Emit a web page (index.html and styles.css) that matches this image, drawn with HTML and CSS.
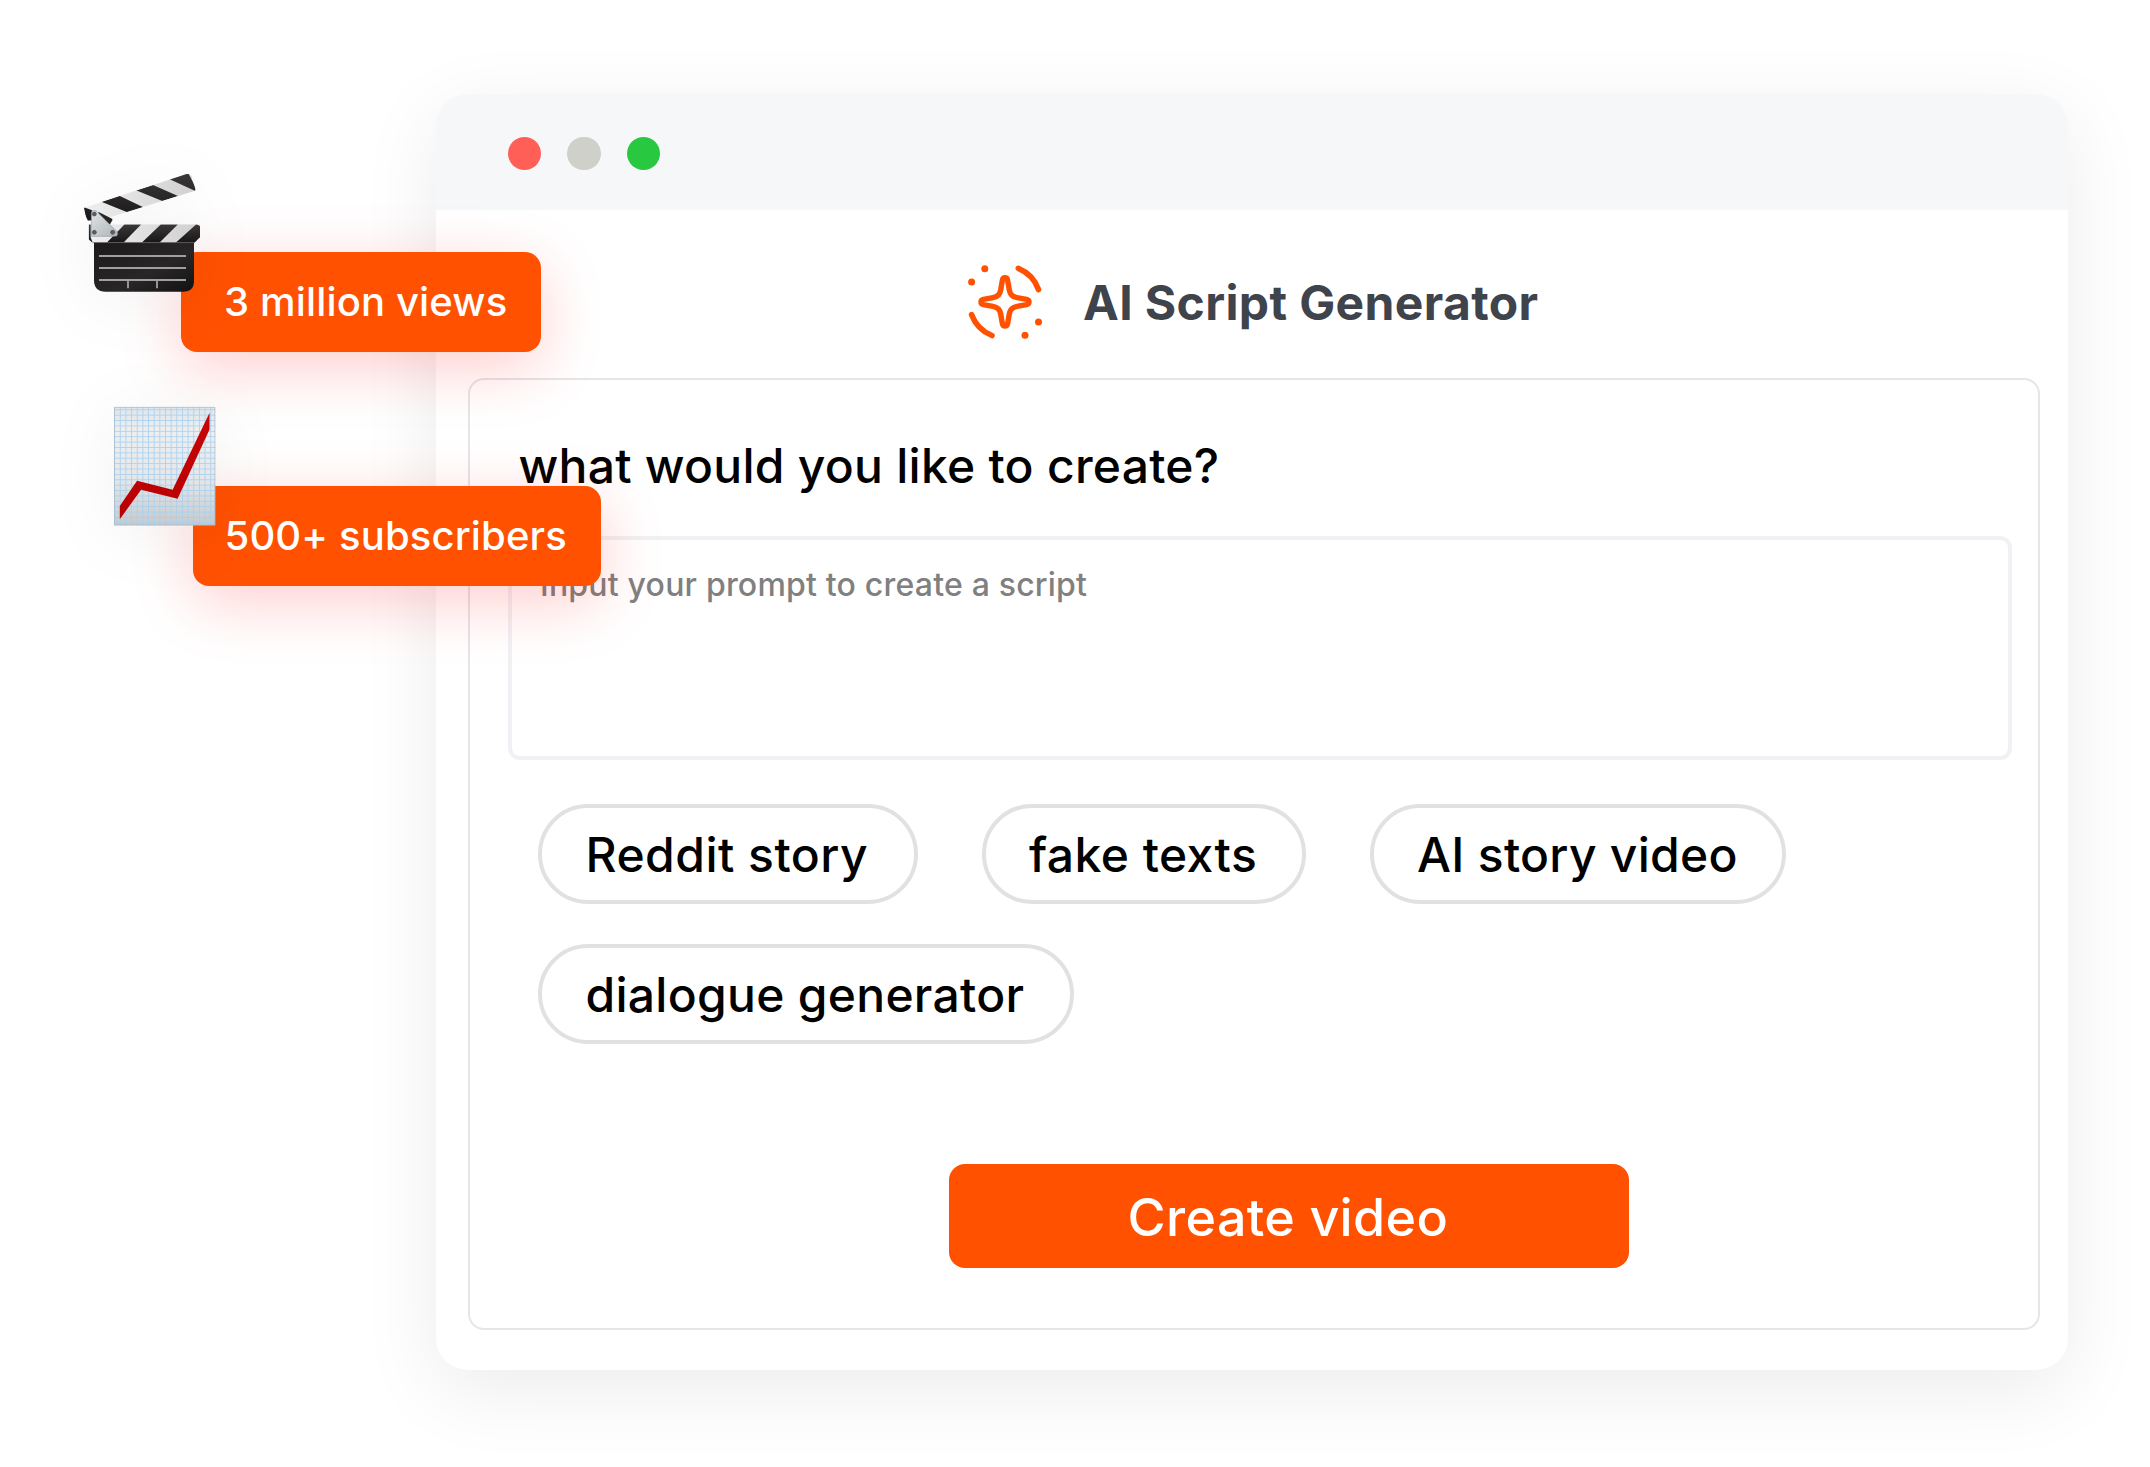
FILE: index.html
```html
<!DOCTYPE html>
<html lang="en">
<head>
<meta charset="utf-8">
<title>AI Script Generator</title>
<link rel="stylesheet" href="styles.css">
</head>
<body>
<main class="stage">
  <section class="window">
    <header class="titlebar">
      <span class="dot dot-red"></span>
      <span class="dot dot-gray"></span>
      <span class="dot dot-green"></span>
    </header>
    <div class="brand">
      <svg class="brand-icon" viewBox="0 0 80 80" fill="none" stroke="#ff5100" stroke-linecap="round" stroke-linejoin="round">
        <path stroke-width="5.4" d="M40 15.8C41.6 15.8 42.3 16.8 42.6 18.1L44.3 28C45 32.3 47.7 35 52 35.7L61.6 37.4C63 37.7 64 38.5 64 40C64 41.5 63 42.3 61.6 42.6L52 44.3C47.7 45 45 47.7 44.3 52L42.6 61.7C42.3 63.1 41.6 64.1 40 64.1C38.4 64.1 37.7 63.1 37.4 61.7L35.7 52C35 47.7 32.3 45 28 44.3L18.4 42.6C17 42.3 16 41.5 16 40C16 38.5 17 37.7 18.4 37.4L28 35.7C32.3 35 35 32.3 35.7 28L37.4 18.1C37.7 16.8 38.4 15.8 40 15.8Z"/>
        <path stroke-width="5.6" d="M53.3 6.3A36 36 0 0 1 73.5 27.5M6.6 52.7A36 36 0 0 0 27 73.5"/>
        <g fill="#ff5100" stroke="none"><circle cx="19.8" cy="6.7" r="3.5"/><circle cx="6.6" cy="20" r="3.5"/><circle cx="73.5" cy="60" r="3.5"/><circle cx="60" cy="73.3" r="3.5"/></g>
      </svg>
      <h1 class="brand-title">AI Script Generator</h1>
    </div>
    <div class="panel">
      <h2 class="question">what would you like to create?</h2>
      <div class="prompt">Input your prompt to create a script</div>
      <div class="chips">
        <span class="chip chip-reddit">Reddit story</span>
        <span class="chip chip-texts">fake texts</span>
        <span class="chip chip-story">AI story video</span>
        <span class="chip chip-dialogue">dialogue generator</span>
      </div>
      <button class="create">Create video</button>
    </div>
  </section>

  <div class="badge badge-views">3 million views</div>
  <div class="badge badge-subs">500+ subscribers</div>

  <svg class="emoji clapper" viewBox="0 0 540 480">
    <defs>
      <linearGradient id="slate" x1="0" y1="0" x2="1" y2="1"><stop offset="0" stop-color="#1b1919"/><stop offset=".6" stop-color="#282626"/><stop offset="1" stop-color="#131212"/></linearGradient>
      <linearGradient id="pale" x1="0" y1="0" x2="1" y2="0"><stop offset="0" stop-color="#f0f0f0"/><stop offset="1" stop-color="#cfcfcf"/></linearGradient>
      <linearGradient id="hinge" x1="0" y1="0" x2="1" y2="1"><stop offset="0" stop-color="#e1e4e6"/><stop offset="1" stop-color="#aeb4b8"/></linearGradient>
      <linearGradient id="ink" x1="0" y1="0" x2="0" y2="1"><stop offset="0" stop-color="#3a3838"/><stop offset="1" stop-color="#181616"/></linearGradient>
      <clipPath id="arm"><path d="M72 173L380 72Q390 69 394 79L406 116Q408 121 403 123L150 202L130 208L84 212Q76 200 72 173Z"/></clipPath>
      <clipPath id="bar"><path d="M86 223H414Q420 223 420 230V262L404 278H97L86 268Z"/></clipPath>
    </defs>
    <g clip-path="url(#arm)">
      <rect x="60" y="60" width="360" height="170" fill="url(#pale)"/>
      <path fill="url(#ink)" d="M70 171L96 181V214H80ZM124 155L178 137L250 172L202 187ZM228 121L279 105L354 138L307 153ZM329 88L384 68L412 122L406 123Z"/>
    </g>
    <path d="M116 186L153 205L158 209L150 223H100Z" fill="#252323"/>
    <path d="M102 270H402V392Q402 425 369 425H137Q102 425 102 390Z" fill="url(#slate)"/>
    <g clip-path="url(#bar)">
      <rect x="80" y="220" width="345" height="60" fill="url(#pale)"/>
      <path fill="url(#ink)" d="M80 223H92V262L98 278H80ZM194 223H244L190 278H140ZM303 223H354L298 278H245ZM409 223L420 228V262L404 278H347Z"/>
    </g>
    <path d="M98 278H404" stroke="#555" stroke-width="2"/>
    <path d="M94 190Q94 180 104 181Q111 182 115 189L172 246Q176 260 163 259H94Z" fill="url(#hinge)" stroke="#7f8589" stroke-width="1.5"/>
    <g fill="#5b5f62" stroke="#44484a" stroke-width="2"><circle cx="103" cy="192" r="6"/><circle cx="103" cy="247" r="6"/><circle cx="158" cy="247" r="6"/></g>
    <path d="M117 318H378M117 354H378M117 390H378M204 391V415M291 391V415" fill="none" stroke="#a0a0a0" stroke-width="5.5"/>
  </svg>

  <svg class="emoji chart" viewBox="0 0 306 358">
    <defs>
      <linearGradient id="paper" x1="0" y1="0" x2="0" y2="1"><stop offset="0" stop-color="#e0e5e8"/><stop offset=".2" stop-color="#efefef"/><stop offset=".6" stop-color="#e6e7e8"/><stop offset="1" stop-color="#c6cacd"/></linearGradient>
      <linearGradient id="line" x1="0" y1="0" x2="0" y2="1"><stop offset="0" stop-color="#c80507"/><stop offset="1" stop-color="#b80002"/></linearGradient>
      <pattern id="grid" x="17" y="7" width="17" height="16.2" patternUnits="userSpaceOnUse"><path d="M1.5 0V16.2M0 1.5H17" stroke="#a3cff2" stroke-width="3" opacity=".85"/></pattern>
    </defs>
    <rect width="304" height="356" fill="url(#paper)"/>
    <rect width="304" height="356" fill="url(#grid)"/>
    <path d="M1 1H303V355H1Z" fill="none" stroke="#9fb2bf" stroke-width="3" opacity=".6"/>
    <path d="M17 298L69 222L176 249L287 17V68L191 276L81 249L17 338Z" fill="url(#line)"/>
  </svg>
</main>
</body>
</html>
```
FILE: styles.css
```css
* { box-sizing: border-box; }

body {
  margin: 0;
  background: #fff;
  font-family: Inter, "Liberation Sans", sans-serif;
  color: #000;
}

.stage {
  position: relative;
  width: 2150px;
  height: 1467px;
  padding: 94px 82px 97px 436px;
  overflow: hidden;
}

.window {
  height: 1276px;
  border-radius: 32px;
  background: #fff;
  box-shadow: 0 20px 80px rgba(0, 0, 0, .08);
}

.titlebar {
  display: flex;
  align-items: center;
  gap: 26.4px;
  height: 116px;
  padding: 3px 0 0 71.8px;
  border-radius: 32px 32px 0 0;
  background: #f5f7f9;
}

.dot { width: 33.2px; height: 33.2px; border-radius: 50%; }
.dot-red { background: #ff5f57; }
.dot-gray { background: #d0d0cb; }
.dot-green { background: #28c840; }

.brand {
  display: flex;
  align-items: center;
  gap: 38px;
  height: 168px;
  padding: 16px 0 0 529px;
}

.brand-icon { width: 80px; height: 80px; }

.brand-title {
  margin: 0;
  padding-top: 2px;
  font-size: 48px;
  font-weight: 700;
  line-height: 58px;
  letter-spacing: .37px;
  color: #3f434c;
  white-space: nowrap;
}

.panel {
  display: flex;
  flex-direction: column;
  width: 1572px;
  height: 952px;
  margin-left: 32px;
  padding: 57px 26px 0 38px;
  border: 2px solid #e5e5ea;
  border-radius: 16px;
}

.question {
  margin: 0 0 41px 10.5px;
  font-size: 48px;
  font-weight: 500;
  line-height: 58px;
  letter-spacing: .26px;
}

.prompt {
  height: 224px;
  padding: 25px 28px;
  border: 4px solid #f0f1f4;
  border-radius: 12px;
  font-size: 32px;
  font-weight: 500;
  line-height: 40px;
  letter-spacing: .2px;
  color: #808080;
}

.chips {
  display: flex;
  flex-wrap: wrap;
  gap: 40px 64px;
  padding: 44px 30px 0;
}

.chip {
  height: 100px;
  padding: 0 0 0 43.5px;
  border: 4px solid #e1e1e1;
  border-radius: 50px;
  font-size: 48px;
  font-weight: 500;
  line-height: 94px;
  white-space: nowrap;
}

.chip-reddit { width: 379.5px; letter-spacing: .48px; }
.chip-texts { width: 324px; letter-spacing: .45px; }
.chip-story { width: 416.5px; letter-spacing: .28px; }
.chip-dialogue { width: 535.5px; letter-spacing: .28px; }

.create {
  width: 680px;
  height: 104px;
  margin: 120px 0 0 441.4px;
  padding: 3px 3px 0 0;
  border: 0;
  border-radius: 16px;
  background: #ff5100;
  color: #fff;
  font: 500 52px/101px Inter, "Liberation Sans", sans-serif;
  letter-spacing: .34px;
}

.badge {
  position: absolute;
  height: 100px;
  border-radius: 16px;
  background: #ff5100;
  box-shadow: 0 16px 64px rgba(255, 0, 0, .2);
  color: #fff;
  font-size: 40px;
  font-weight: 500;
  line-height: 99px;
  letter-spacing: .15px;
  white-space: nowrap;
}

.badge-views { left: 181px; top: 252px; width: 360px; padding-left: 43px; }
.badge-subs { left: 192.5px; top: 486px; width: 408px; padding-left: 32px; }

.emoji { position: absolute; overflow: visible; filter: drop-shadow(0 8px 32px rgba(0, 0, 0, .05)); }
.clapper { left: 60px; top: 150px; width: 180px; height: 160px; }
.chart { left: 114px; top: 407px; width: 102px; height: 119px; }
```
